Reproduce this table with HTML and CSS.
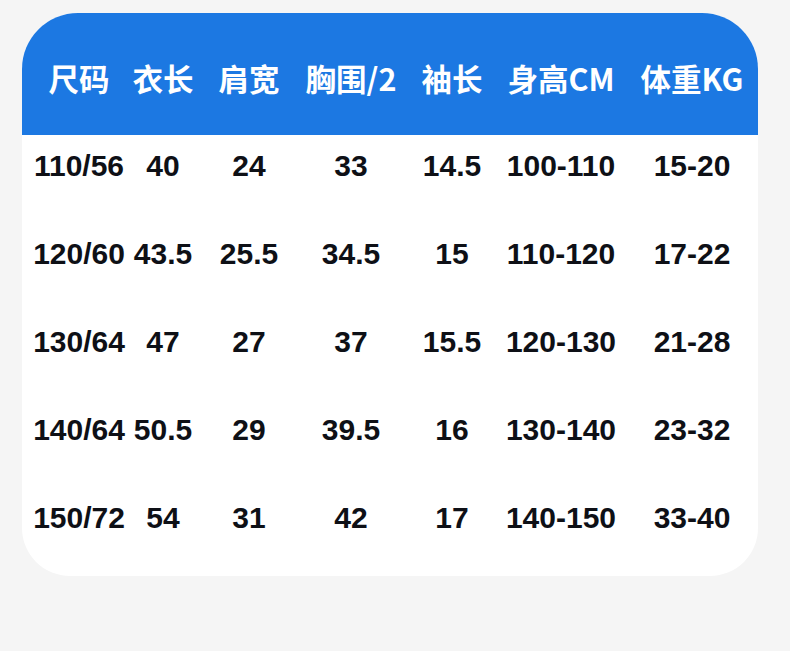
FILE: index.html
```html
<!DOCTYPE html>
<html lang="zh">
<head>
<meta charset="utf-8">
<title>尺码表</title>
<link rel="stylesheet" href="styles.css">
</head>
<body>
<div class="card">
  <div class="head grid">
    <div>尺码</div><div>衣长</div><div>肩宽</div><div>胸围/2</div><div>袖长</div><div>身高CM</div><div>体重KG</div>
  </div>
  <div class="rows grid">
    <div>110/56</div><div>40</div><div>24</div><div>33</div><div>14.5</div><div>100-110</div><div>15-20</div>
    <div>120/60</div><div>43.5</div><div>25.5</div><div>34.5</div><div>15</div><div>110-120</div><div>17-22</div>
    <div>130/64</div><div>47</div><div>27</div><div>37</div><div>15.5</div><div>120-130</div><div>21-28</div>
    <div>140/64</div><div>50.5</div><div>29</div><div>39.5</div><div>16</div><div>130-140</div><div>23-32</div>
    <div>150/72</div><div>54</div><div>31</div><div>42</div><div>17</div><div>140-150</div><div>33-40</div>
  </div>
</div>
</body>
</html>
```
FILE: styles.css
```css
html, body {
  margin: 0;
  padding: 0;
  background: #f5f5f5;
}
body {
  width: 790px;
  height: 651px;
  overflow: hidden;
  padding-top: 13px;
  box-sizing: border-box;
}
.card {
  margin-left: 22px;
  width: 736px;
  height: 563px;
  background: #ffffff;
  border-radius: 56px 56px 48px 48px;
  overflow: hidden;
  display: flex;
  flex-direction: column;
}
.grid {
  display: grid;
  grid-template-columns: 86px 82px 90px 114px 88px 130px 132px;
  padding-left: 14px;
  justify-items: center;
  align-items: center;
  white-space: nowrap;
}
.head {
  height: 122px;
  box-sizing: border-box;
  padding-top: 8px;
  background: #1c78e2;
  color: #ffffff;
  font-family: "Noto Sans CJK SC", "Noto Sans", sans-serif;
  font-weight: 700;
  font-size: 30.5px;
  line-height: 1;
}
.rows {
  grid-auto-rows: 62px;
  row-gap: 26px;
  color: #0e1016;
  font-family: "Liberation Sans", Arial, sans-serif;
  font-weight: 700;
  font-size: 30px;
  line-height: 1;
}
```
